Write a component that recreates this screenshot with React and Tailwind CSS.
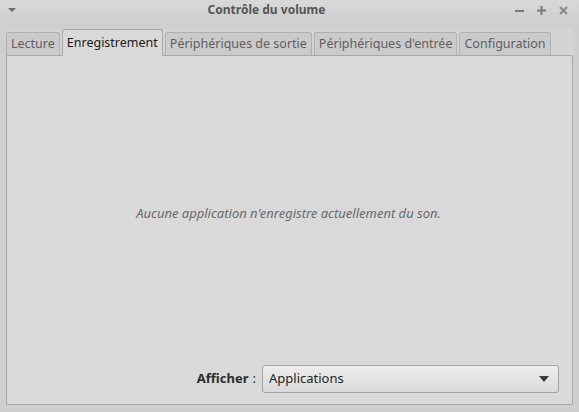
import React from "react";

const tabs = [
  { label: "Lecture", active: false },
  { label: "Enregistrement", active: true },
  { label: "Périphériques de sortie", active: false },
  { label: "Périphériques d'entrée", active: false },
  { label: "Configuration", active: false },
];

const App = () => {
  return (
    <div
      className="w-[579px] h-[412px] bg-[#cfcfcf] flex flex-col overflow-hidden text-[13px]"
      style={{ fontFamily: '"Noto Sans", "Open Sans", sans-serif' }}
    >
      {/* title bar */}
      <div className="h-[20px] flex items-center bg-gradient-to-b from-[#d9d9d9] to-[#cfcfcf]">
        <div className="w-[24px] flex justify-center">
          <svg width="10" height="6" viewBox="0 0 10 6">
            <path d="M1 1 L9 1 L5 5 Z" fill="#6b6b6b" />
          </svg>
        </div>
        <div className="flex-1 text-center font-bold text-[12px] text-[#555555] pr-[6px]">Contrôle du volume</div>
        <div className="flex items-center gap-[13px] pr-[11px] text-[#6b6b6b]">
          <svg width="9" height="9" viewBox="0 0 9 9">
            <rect x="0" y="4" width="9" height="2" fill="#7a7a7a" />
          </svg>
          <svg width="9" height="9" viewBox="0 0 9 9">
            <rect x="0" y="3.5" width="9" height="2" fill="#7a7a7a" />
            <rect x="3.5" y="0" width="2" height="9" fill="#7a7a7a" />
          </svg>
          <svg width="9" height="9" viewBox="0 0 9 9">
            <path d="M1 1 L8 8 M8 1 L1 8" stroke="#8a8a8a" strokeWidth="2" />
          </svg>
        </div>
      </div>

      {/* notebook */}
      <div className="flex flex-col mx-[6px] mt-[9px] mb-[7px] flex-1">
        <div className="flex items-end gap-[2px] h-[26px] bg-[#d4d4d4] rounded-tr-[3px] text-[12.5px]">
          {tabs.map((t) =>
            t.active ? (
              <div
                key={t.label}
                className="h-[27px] -mb-px px-[4px] flex items-center bg-[#d9d9d9] border border-b-0 border-[#a8a8a8] rounded-t-[3px] text-[#1a1a1a] z-10"
              >
                {t.label}
              </div>
            ) : (
              <div
                key={t.label}
                className="h-[23px] px-[4px] flex items-center bg-[#cbcbcb] border border-b-0 border-[#b0b0b0] rounded-t-[3px] text-[#5e5e5e]"
              >
                {t.label}
              </div>
            )
          )}
        </div>
        <div className="flex-1 flex flex-col bg-[#d9d9d9] border border-[#a8a8a8] rounded-b-[2px] rounded-tr-[2px]">
          <div className="flex-1 flex items-center justify-center pt-[6px] pr-[2px] italic text-[#6a6a6a]">
            Aucune application n'enregistre actuellement du son.
          </div>
          <div className="flex items-center justify-end pr-[13px] pb-[11px]">
            <span className="font-bold text-[#2d2d2d]">Afficher</span>
            <span className="ml-[4px] mr-[6px] text-[#2d2d2d]">:</span>
            <div className="w-[297px] h-[28px] flex items-center justify-between pl-[6px] pr-[9px] border border-[#a3a3a3] rounded-[3px] bg-gradient-to-b from-[#eeeeee] to-[#d9d9d9] text-[#1f1f1f]">
              <span>Applications</span>
              <svg width="10" height="6" viewBox="0 0 10 6">
                <path d="M0 0 L10 0 L5 6 Z" fill="#3a3a3a" />
              </svg>
            </div>
          </div>
        </div>
      </div>
    </div>
  );
};

export default App;
